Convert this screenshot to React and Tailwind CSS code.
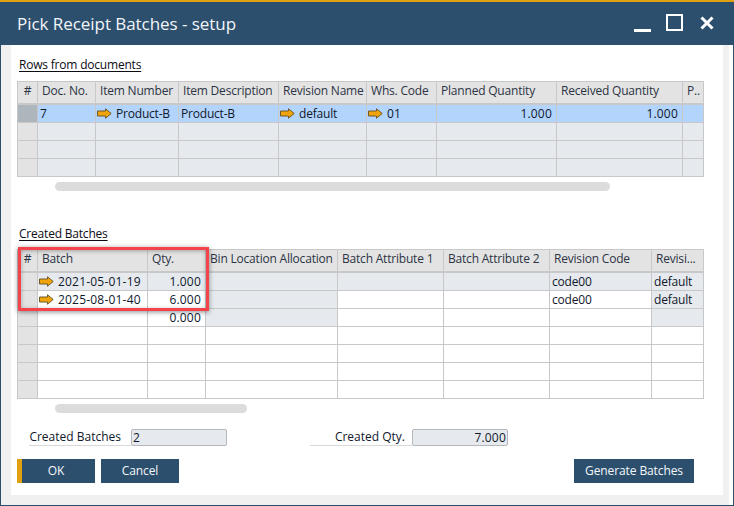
import React from 'react';

const FONT = 'font-["Open_Sans","Noto_Sans",sans-serif]';

// Orange link arrow used in the grid cells
const LinkArrow = () => (
    <svg width="15" height="11" viewBox="0 0 15 11" className="shrink-0">
        <path d="M0.5 3H8.5V0.8L14.2 5.5L8.5 10.2V8H0.5Z" fill="#f0a30a" stroke="#6e5a2c" strokeWidth="1" />
    </svg>
);

const Cell = ({ cell }) => {
    const { text = '', bg = 'bg-white', right, link, num } = cell;
    const pad = right ? 'justify-end pr-[4px]' : link ? 'gap-[4px] pl-[1px]' : 'pl-[2px]';
    return (
        <div className={`h-[18px] border-r border-b border-[#c8c8c8] flex items-center overflow-hidden whitespace-nowrap ${bg} ${pad}`}>
            {link && <LinkArrow />}
            <span className={num ? 'tracking-[0.2px]' : ''}>{text}</span>
        </div>
    );
};

const Grid = ({ cols, headers, rows }) => (
    <div className={`grid ${cols} border-l border-t border-[#c8c8c8] text-[12px] leading-[16px] text-[#10182c]`}>
        {headers.map((h, i) => (
            <div
                key={i}
                className={`h-[23px] pb-[3px] bg-[#e3e3e3] border-r border-b-2 border-[#c8c8c8] flex items-center whitespace-nowrap overflow-hidden text-[#2c3444] ${
                    i === 0 ? 'justify-center' : 'pl-[4px]'
                }`}
            >
                {h}
            </div>
        ))}
        {rows.flat().map((cell, i) => (
            <Cell key={i} cell={cell} />
        ))}
    </div>
);

const HEAD = 'bg-[#e3e3e3]';
const GREY = 'bg-[#e6eaee]';
const SEL = 'bg-[#b3d4fc]';

const docRows = [
    [
        { bg: 'bg-[#adb5bd]' },
        { text: '7', bg: SEL },
        { text: 'Product-B', bg: SEL, link: true },
        { text: 'Product-B', bg: SEL },
        { text: 'default', bg: SEL, link: true },
        { text: '01', bg: SEL, link: true, num: true },
        { text: '1.000', bg: SEL, right: true, num: true },
        { text: '1.000', bg: SEL, right: true, num: true },
        { bg: SEL },
    ],
    ...[0, 1, 2].map(() => [{ bg: HEAD }, ...Array(8).fill({ bg: GREY })]),
];

const batchRows = [
    [
        { bg: HEAD },
        { text: '2021-05-01-19', bg: GREY, link: true, num: true },
        { text: '1.000', bg: GREY, right: true, num: true },
        { bg: GREY },
        { bg: GREY },
        { bg: GREY },
        { text: 'code00', bg: GREY },
        { text: 'default', bg: GREY },
    ],
    [
        { bg: HEAD },
        { text: '2025-08-01-40', link: true, num: true },
        { text: '6.000', right: true, num: true },
        { bg: GREY },
        {},
        {},
        { text: 'code00' },
        { text: 'default', bg: GREY },
    ],
    [{ bg: HEAD }, {}, { text: '0.000', right: true, num: true }, { bg: GREY }, {}, {}, {}, { bg: GREY }],
    ...[0, 1, 2, 3].map(() => [{ bg: HEAD }, ...Array(7).fill({})]),
];

const Field = ({ label, value, right, className, labelPad }) => (
    <div className={`flex items-stretch h-[17px] tracking-normal ${className}`}>
        <div className={`w-[102px] border-b border-[#d8d8d8] flex items-center justify-end whitespace-nowrap ${labelPad}`}>{label}</div>
        <div
            className={`w-[96px] bg-[#e6eaee] border border-[#b4b8bc] rounded-[2px] flex items-center ${
                right ? 'justify-end pr-[1px] tracking-[0.2px]' : 'pl-[1px]'
            }`}
        >
            {value}
        </div>
    </div>
);

const Button = ({ children, className = 'w-[78px]', primary }) => (
    <div
        className={`h-[24px] bg-[#2d4f6e] text-[#f4f7fa] tracking-[-0.1px] flex items-center justify-center ${className} ${
            primary ? 'border-l-[5px] border-[#e0a010] pr-[5px]' : ''
        }`}
    >
        {children}
    </div>
);

export default function App() {
    return (
        <div className={`w-[734px] h-[506px] flex flex-col overflow-hidden bg-white text-[12px] tracking-[-0.2px] ${FONT}`}>
            {/* Title bar */}
            <div className="h-[45px] shrink-0 bg-[#2d4f6e] border-t-2 border-[#e0a010] flex items-center justify-between pl-[17px] pr-[20px]">
                <span className="text-[17px] tracking-[-0.05px] leading-[26px] text-[#f2f5f8] pt-[1px]">Pick Receipt Batches - setup</span>
                <div className="flex items-center gap-[15px] -mt-[2px]">
                    <div className="w-[17px] h-[17px] flex items-end"><div className="w-[17px] h-[3px] bg-white -mb-[1px]" /></div>
                    <div className="w-[17px] h-[17px] border-2 border-white" />
                    <svg width="14" height="14" viewBox="0 0 14 14" className="ml-[2px]">
                        <path d="M1.5 1.5L12.5 12.5M12.5 1.5L1.5 12.5" stroke="#fff" strokeWidth="3" fill="none" />
                    </svg>
                </div>
            </div>

            {/* Window frame */}
            <div className="flex-1 flex flex-col border-x border-b border-[#2d4f6e] pr-[4px]">
                <div className="flex-1 flex flex-col bg-[#f0f0f0] pl-[10px] pr-[6px] pb-[10px]">
                    <div className="flex-1 bg-white pl-[6px] pr-[19px] pt-[12px] flex flex-col">
                        <div className="h-[16px] leading-[16px] pl-[2px] text-[#0c0c14] underline underline-offset-2">Rows from documents</div>
                        <div className="mt-[8px]">
                            <Grid
                                cols="grid-cols-[20px_58px_83px_100px_88px_70px_120px_126px_21px]"
                                headers={['#', 'Doc. No.', 'Item Number', 'Item Description', 'Revision Name', 'Whs. Code', 'Planned Quantity', 'Received Quantity', 'P..']}
                                rows={docRows}
                            />
                        </div>
                        <div className="mt-[5px] ml-[38px] w-[555px] h-[9px] rounded-full bg-[#dcdcdc]" />

                        <div className="mt-[35px] h-[16px] leading-[16px] pl-[2px] text-[#0c0c14] underline underline-offset-2">Created Batches</div>
                        <div className="mt-[7px] relative">
                            <Grid
                                cols="grid-cols-[20px_110px_58px_132px_106px_106px_102px_52px]"
                                headers={['#', 'Batch', 'Qty.', 'Bin Location Allocation', 'Batch Attribute 1', 'Batch Attribute 2', 'Revision Code', 'Revisi...']}
                                rows={batchRows}
                            />
                            {/* Red callout drawn over the grid */}
                            <div className="absolute left-[1px] -top-[2px] w-[191px] h-[64px] border-[3px] border-[#f4434a] shadow-[0_1px_5px_rgba(0,0,0,0.45),inset_0_1px_4px_rgba(0,0,0,0.3)]" />
                        </div>
                        <div className="mt-[5px] ml-[38px] w-[192px] h-[9px] rounded-full bg-[#dcdcdc]" />

                        <div className="mt-[16px] flex text-[#10182c]">
                            <Field label="Created Batches" value="2" className="ml-[12px]" labelPad="pr-[10px]" />
                            <Field label="Created Qty." value="7.000" right className="ml-[83px]" labelPad="pr-[7px]" />
                        </div>

                        <div className="mt-[13px] flex">
                            <Button primary>OK</Button>
                            <Button className="w-[78px] ml-[6px]">Cancel</Button>
                            <Button className="w-[120px] ml-[395px]">Generate Batches</Button>
                        </div>
                    </div>
                </div>
            </div>
        </div>
    );
}
